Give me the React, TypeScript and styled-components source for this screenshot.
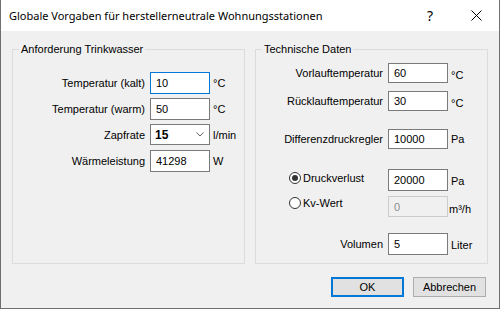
import styled, { createGlobalStyle } from 'styled-components';

const GlobalStyle = createGlobalStyle`
  html, body {
    margin: 0;
    padding: 0;
    background: #ffffff;
  }
  body {
    font-family: 'Liberation Sans', Arial, sans-serif;
    font-size: 11px;
    color: #000000;
  }
`;

const Window = styled.div`
  width: 500px;
  height: 309px;
  box-sizing: border-box;
  border: 1px solid #707070;
  border-top: none;
  background: #f0f0f0;
  display: flex;
  flex-direction: column;
`;

const TitleBar = styled.div`
  height: 31px;
  flex-shrink: 0;
  background: #ffffff;
  display: flex;
  align-items: center;
`;

const Title = styled.div`
  flex: 1;
  padding-left: 8px;
  font-family: 'Noto Sans', 'DejaVu Sans', sans-serif;
  font-size: 11px;
  white-space: nowrap;
`;

const CaptionButton = styled.div`
  width: 46px;
  height: 31px;
  display: flex;
  align-items: center;
  justify-content: center;
  font-family: 'Noto Sans', 'DejaVu Sans', sans-serif;
  font-size: 14px;
`;

const Body = styled.div`
  display: flex;
  flex-direction: column;
  padding: 18px 11px 0 11px;
`;

const Columns = styled.div`
  display: flex;
  gap: 10px;
`;

const Group = styled.div<{ $padTop: number }>`
  position: relative;
  width: 233px;
  height: 215px;
  box-sizing: border-box;
  border: 1px solid #dcdcdc;
  padding-top: ${(p) => p.$padTop}px;
  display: flex;
  flex-direction: column;
`;

const Caption = styled.span`
  position: absolute;
  top: -9px;
  left: 6px;
  padding: 0 2px;
  background: #f0f0f0;
  line-height: 16px;
`;

const Row = styled.div<{ $top?: number; $height: number }>`
  display: flex;
  align-items: center;
  height: ${(p) => p.$height}px;
  margin-top: ${(p) => p.$top ?? 0}px;
`;

const Label = styled.div<{ $width: number }>`
  width: ${(p) => p.$width}px;
  margin-right: 5px;
  text-align: right;
  white-space: nowrap;
`;

const RadioLabel = styled.div<{ $width: number; $shift?: number }>`
  width: ${(p) => p.$width}px;
  margin-right: 5px;
  padding-left: 33px;
  box-sizing: border-box;
  display: flex;
  align-items: center;
  gap: 2px;
  position: relative;
  top: ${(p) => p.$shift ?? 0}px;
`;

const RadioCircle = styled.span<{ $checked?: boolean }>`
  width: 12px;
  height: 12px;
  box-sizing: border-box;
  border: 1px solid #333333;
  border-radius: 50%;
  background: #ffffff;
  display: flex;
  align-items: center;
  justify-content: center;

  &::after {
    content: '';
    display: ${(p) => (p.$checked ? 'block' : 'none')};
    width: 6px;
    height: 6px;
    border-radius: 50%;
    background: #333333;
  }
`;

const TextBox = styled.input<{ $focused?: boolean }>`
  width: 60px;
  height: 100%;
  box-sizing: border-box;
  margin: 0;
  padding: 0 0 0 5px;
  font-family: inherit;
  font-size: 11px;
  color: #000000;
  background: #ffffff;
  border: 1px solid ${(p) => (p.$focused ? '#0078d7' : '#7a7a7a')};
  outline: none;

  &:disabled {
    background: #f0f0f0;
    border-color: #cccccc;
    color: #8d8d8d;
  }
`;

const Combo = styled.div`
  width: 60px;
  height: 21px;
  box-sizing: border-box;
  border: 1px solid #7a7a7a;
  background: #ffffff;
  display: flex;
  align-items: center;
  justify-content: space-between;
  padding: 0 5px 0 4px;
  font-weight: bold;
  font-size: 12px;
`;

const Unit = styled.span<{ $drop?: number; $gap?: number }>`
  margin-left: ${(p) => p.$gap ?? 3}px;
  white-space: nowrap;
  position: relative;
  top: ${(p) => p.$drop ?? 0}px;
`;

const ButtonRow = styled.div`
  display: flex;
  justify-content: flex-end;
  gap: 9px;
  margin-top: 13px;
  padding-right: 2px;
`;

const Button = styled.div<{ $primary?: boolean }>`
  width: 73px;
  height: 20px;
  box-sizing: border-box;
  background: #e1e1e1;
  border: ${(p) => (p.$primary ? '2px solid #0078d7' : '1px solid #adadad')};
  display: flex;
  align-items: center;
  justify-content: center;
`;

const Chevron = () => (
  <svg width="8" height="5" viewBox="0 0 8 5">
    <polyline points="0.5,0.5 4,4 7.5,0.5" fill="none" stroke="#606060" strokeWidth="1" />
  </svg>
);

const CloseIcon = () => (
  <svg width="11" height="11" viewBox="0 0 11 11">
    <path d="M0.5 0.5 L10.5 10.5 M10.5 0.5 L0.5 10.5" stroke="#000" strokeWidth="1" />
  </svg>
);

export default function App() {
  return (
    <>
      <GlobalStyle />
      <Window>
        <TitleBar>
          <Title>Globale Vorgaben für herstellerneutrale Wohnungsstationen</Title>
          <CaptionButton>?</CaptionButton>
          <CaptionButton>
            <CloseIcon />
          </CaptionButton>
        </TitleBar>
        <Body>
          <Columns>
            <Group $padTop={22}>
              <Caption>Anforderung Trinkwasser</Caption>
              <Row $height={22}>
                <Label $width={132}>Temperatur (kalt)</Label>
                <TextBox $focused defaultValue="10" />
                <Unit>°C</Unit>
              </Row>
              <Row $top={4} $height={22}>
                <Label $width={132}>Temperatur (warm)</Label>
                <TextBox defaultValue="50" />
                <Unit>°C</Unit>
              </Row>
              <Row $top={4} $height={21}>
                <Label $width={132}>Zapfrate</Label>
                <Combo>
                  <span>15</span>
                  <Chevron />
                </Combo>
                <Unit>l/min</Unit>
              </Row>
              <Row $top={5} $height={22}>
                <Label $width={132}>Wärmeleistung</Label>
                <TextBox defaultValue="41298" />
                <Unit>W</Unit>
              </Row>
            </Group>
            <Group $padTop={13}>
              <Caption>Technische Daten</Caption>
              <Row $height={20}>
                <Label $width={127}>Vorlauftemperatur</Label>
                <TextBox defaultValue="60" />
                <Unit $drop={2}>°C</Unit>
              </Row>
              <Row $top={8} $height={20}>
                <Label $width={127}>Rücklauftemperatur</Label>
                <TextBox defaultValue="30" />
                <Unit $drop={2}>°C</Unit>
              </Row>
              <Row $top={18} $height={20}>
                <Label $width={127}>Differenzdruckregler</Label>
                <TextBox defaultValue="10000" />
                <Unit>Pa</Unit>
              </Row>
              <Row $top={20} $height={22}>
                <RadioLabel $width={127} $shift={-2}>
                  <RadioCircle $checked />
                  Druckverlust
                </RadioLabel>
                <TextBox defaultValue="20000" />
                <Unit $drop={1}>Pa</Unit>
              </Row>
              <Row $top={5} $height={21}>
                <RadioLabel $width={127} $shift={-4}>
                  <RadioCircle />
                  Kv-Wert
                </RadioLabel>
                <TextBox disabled defaultValue="0" />
                <Unit $drop={2} $gap={1}>m³/h</Unit>
              </Row>
              <Row $top={16} $height={22}>
                <Label $width={127}>Volumen</Label>
                <TextBox defaultValue="5" />
                <Unit $drop={1}>Liter</Unit>
              </Row>
            </Group>
          </Columns>
          <ButtonRow>
            <Button $primary>OK</Button>
            <Button>Abbrechen</Button>
          </ButtonRow>
        </Body>
      </Window>
    </>
  );
}
